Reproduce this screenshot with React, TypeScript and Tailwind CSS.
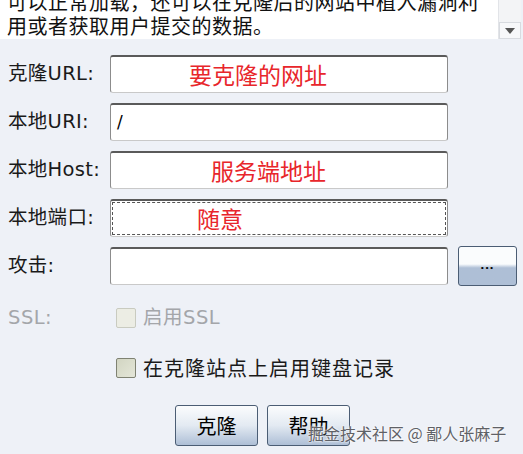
import React from "react";

const sans = "font-['Tahoma','DejaVu_Sans','Noto_Sans_CJK_SC',sans-serif]";
const cjk = "font-['Noto_Sans_CJK_SC',sans-serif]";

const Field = ({ label, value, note, pad, focused }: { label: string; value?: string; note?: string; pad?: string; focused?: boolean }) => {
  return (
    <div className="flex items-center h-[38px]">
      <div className={`w-[110px] pl-[8px] text-[19.5px] tracking-[0.3px] text-[#1a1a1a] ${sans}`}>{label}</div>
      <div className="w-[338px] h-[38px] bg-white rounded-[3px] border-t-2 border-t-[#5a5a5a] border-x border-x-[#8c8c8c] border-b border-b-[#c9c9c9] p-[1px]">
        <div className={`h-full flex items-center ${focused ? "border border-dashed border-[#555]" : "border border-transparent"}`}>
          {value && <span className="pl-[4px] text-[17px] text-black font-['DejaVu_Sans',sans-serif]">{value}</span>}
          {note && <span className={`${pad} text-[23px] leading-none text-[#e8262b] ${cjk}`}>{note}</span>}
        </div>
      </div>
    </div>
  );
};

const Check = ({ disabled }: { disabled?: boolean }) => (
  <div
    className={`w-[20px] h-[20px] rounded-[2px] border ${
      disabled ? "border-[#c9cbc0] bg-[#ecede4]" : "border-[#7f8272] bg-gradient-to-br from-[#d2d5c2] to-[#e4e6d8]"
    }`}
  />
);

const WinButton = ({ text }: { text: string }) => (
  <div className="w-[83px] h-[41px] rounded-[3px] border border-[#4b5d74] bg-gradient-to-b from-[#fbfcfd] via-[#e3eaf2] to-[#aebfd6] flex items-center justify-center">
    <span className={`text-[20px] text-black ${cjk}`}>{text}</span>
  </div>
);

export default function App() {
  return (
    <div className="relative w-[523px] h-[454px] bg-[#eef1f7] overflow-hidden">
      {/* text area */}
      <div className="flex h-[39px]">
        <div className="w-[498px] bg-white overflow-hidden">
          <div className={`-mt-[10px] pl-[7px] text-[20px] leading-[24px] tracking-[0.5px] text-[#111] ${cjk}`}>
            <div>可以正常加载，还可以在克隆后的网站中植入漏洞利</div>
            <div>用或者获取用户提交的数据。</div>
          </div>
        </div>
        <div className="w-[23px] bg-[#f3f4f6] border-l border-[#e2e4e8] flex flex-col justify-end">
          <div className="h-[17px] border border-[#d8dbe0] bg-[#f7f8fa] flex items-center justify-center">
            <svg width="10" height="6" viewBox="0 0 10 6">
              <path d="M0 0 H10 L5 6 Z" fill="#555" />
            </svg>
          </div>
        </div>
      </div>

      <div className="mt-[16px] flex flex-col gap-[10px]">
        <Field label="克隆URL:" note="要克隆的网址" pad="pl-[76px]" />
        <Field label="本地URI:" value="/" />
        <Field label="本地Host:" note="服务端地址" pad="pl-[98px]" />
        <Field label="本地端口:" note="随意" pad="pl-[84px]" focused />
        <div className="flex items-center h-[38px]">
          <Field label="攻击:" />
          <div className="ml-[10px] w-[59px] h-[40px] rounded-[3px] border border-[#4b5d74] bg-gradient-to-b from-[#fafcfd] from-45% to-[#aebfd6] to-55% flex items-center justify-center">
            <span className="text-[13px] text-black font-bold tracking-[1px] -mt-[2px]">...</span>
          </div>
        </div>
      </div>

      <div className="mt-[22px] flex items-center h-[21px]">
        <div className={`w-[116px] pl-[8px] text-[19.5px] tracking-[0.5px] text-[#a4a6aa] ${sans}`}>SSL:</div>
        <Check disabled />
        <span className={`ml-[7px] text-[19.5px] tracking-[0.5px] text-[#a4a6aa] ${sans}`}>启用SSL</span>
      </div>

      <div className="mt-[29px] flex items-center h-[21px]">
        <div className="w-[116px]" />
        <Check />
        <span className={`ml-[7px] text-[20px] tracking-[1px] text-[#1a1a1a] ${cjk}`}>在克隆站点上启用键盘记录</span>
      </div>

      <div className="mt-[27px] flex gap-[9px] pl-[175px]">
        <WinButton text="克隆" />
        <WinButton text="帮助" />
      </div>

      <div className={`absolute left-[308px] top-[421px] text-[16px] text-[#5f6166] [text-shadow:0_0_2px_#fff,0_0_2px_#fff] ${cjk}`}>
        掘金技术社区 @ 鄙人张麻子
      </div>
    </div>
  );
}
